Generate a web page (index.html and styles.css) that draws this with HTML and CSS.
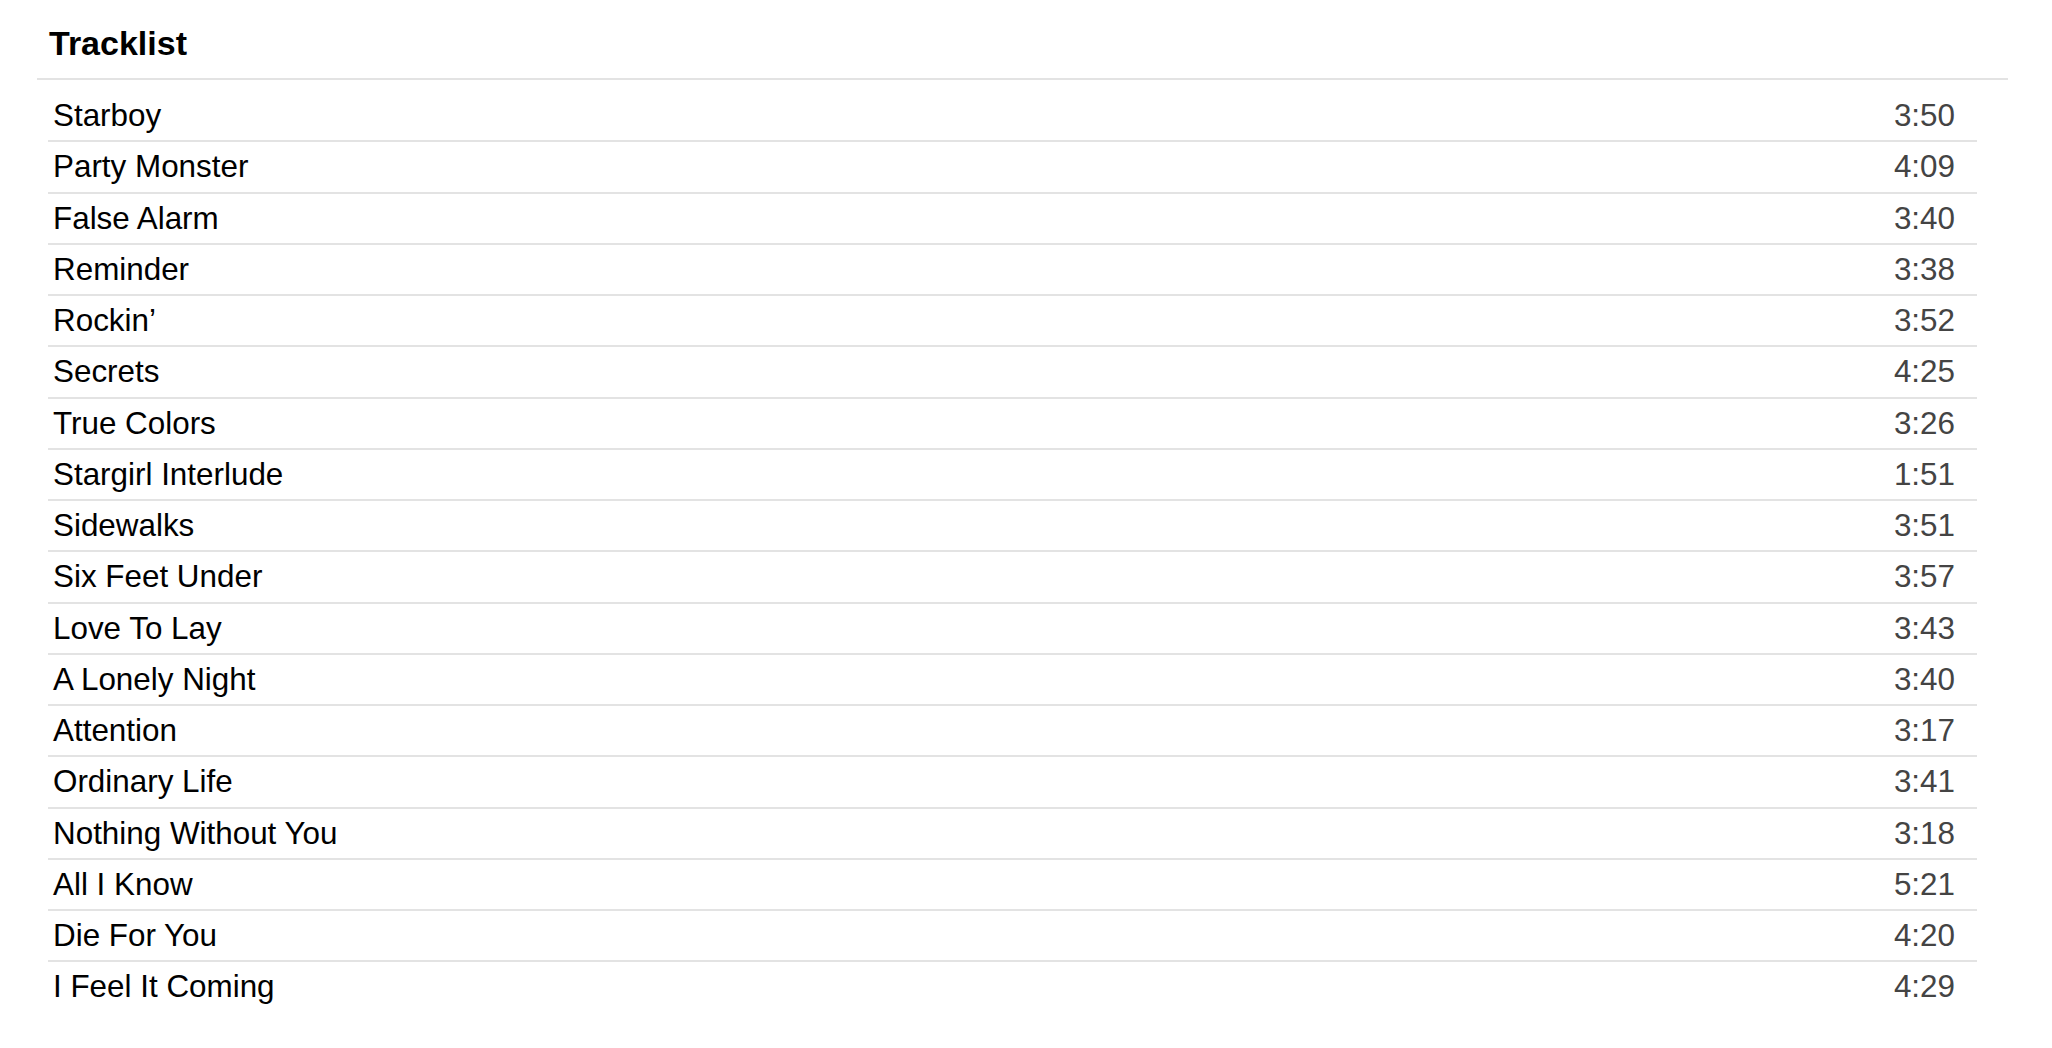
FILE: index.html
```html
<!DOCTYPE html>
<html lang="en">
<head>
<meta charset="utf-8">
<title>Tracklist</title>
<link rel="stylesheet" href="styles.css">
</head>
<body>
<section class="tracklist">
  <h2 class="title">Tracklist</h2>
  <ul class="list">
    <li class="row"><span class="name">Starboy</span><span class="time">3:50</span></li>
    <li class="row"><span class="name">Party Monster</span><span class="time">4:09</span></li>
    <li class="row"><span class="name">False Alarm</span><span class="time">3:40</span></li>
    <li class="row"><span class="name">Reminder</span><span class="time">3:38</span></li>
    <li class="row"><span class="name">Rockin’</span><span class="time">3:52</span></li>
    <li class="row"><span class="name">Secrets</span><span class="time">4:25</span></li>
    <li class="row"><span class="name">True Colors</span><span class="time">3:26</span></li>
    <li class="row"><span class="name">Stargirl Interlude</span><span class="time">1:51</span></li>
    <li class="row"><span class="name">Sidewalks</span><span class="time">3:51</span></li>
    <li class="row"><span class="name">Six Feet Under</span><span class="time">3:57</span></li>
    <li class="row"><span class="name">Love To Lay</span><span class="time">3:43</span></li>
    <li class="row"><span class="name">A Lonely Night</span><span class="time">3:40</span></li>
    <li class="row"><span class="name">Attention</span><span class="time">3:17</span></li>
    <li class="row"><span class="name">Ordinary Life</span><span class="time">3:41</span></li>
    <li class="row"><span class="name">Nothing Without You</span><span class="time">3:18</span></li>
    <li class="row"><span class="name">All I Know</span><span class="time">5:21</span></li>
    <li class="row"><span class="name">Die For You</span><span class="time">4:20</span></li>
    <li class="row"><span class="name">I Feel It Coming</span><span class="time">4:29</span></li>
  </ul>
</section>
</body>
</html>
```

FILE: styles.css
```css
html, body {
  margin: 0;
  padding: 0;
  background: #ffffff;
}

body {
  font-family: "Liberation Sans", Arial, sans-serif;
  color: #000;
}

.tracklist {
  padding: 24px 44px 0 37px;
}

.title {
  margin: 0;
  font-size: 34px;
  line-height: 39px;
  font-weight: bold;
  color: #000;
  padding: 0 0 15px 12px;
  border-bottom: 2px solid #e3e3e3;
}

.list {
  list-style: none;
  margin: 11px 31px 0 11px;
  padding: 0;
}

.row {
  display: flex;
  justify-content: space-between;
  align-items: center;
  font-size: 31.4px;
  line-height: 36px;
  padding: 7px 22px 6.25px 5px;
  border-bottom: 2px solid #e3e3e3;
}

.row:last-child {
  border-bottom: none;
}

.name {
  color: #000;
}

.time {
  color: #444;
}
```
